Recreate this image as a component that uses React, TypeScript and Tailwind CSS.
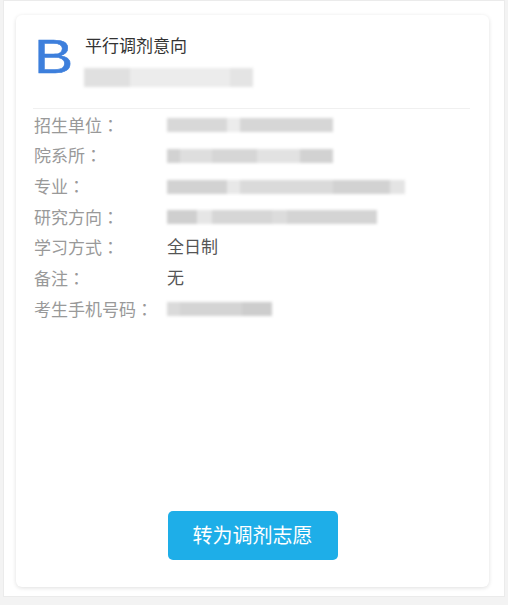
const font = { fontFamily: '"Liberation Sans", "Noto Sans CJK SC", sans-serif' }
const colonFont = { fontFamily: '"Noto Sans CJK JP", sans-serif' }

type Seg = [number, string]

function Blur({ segs, h = 14 }: { segs: Seg[]; h?: number }) {
  return (
    <div className="flex blur-[1.5px]" style={{ height: h }}>
      {segs.map(([w, c], i) => (
        <div key={i} style={{ width: w, background: c }} />
      ))}
    </div>
  )
}

const rows: { label: string; value?: string; segs?: Seg[] }[] = [
  { label: '招生单位', segs: [[60, '#d8d8d8'], [13, '#ececec'], [93, '#d6d6d6']] },
  { label: '院系所', segs: [[13, '#d2d2d2'], [32, '#dedede'], [45, '#d6d6d6'], [43, '#e2e2e2'], [33, '#d2d2d2']] },
  { label: '专业', segs: [[60, '#d2d2d2'], [13, '#e8e8e8'], [93, '#dadada'], [57, '#d2d2d2'], [15, '#e4e4e4']] },
  { label: '研究方向', segs: [[30, '#cfcfcf'], [15, '#e6e6e6'], [60, '#d6d6d6'], [15, '#dcdcdc'], [90, '#d4d4d4']] },
  { label: '学习方式', value: '全日制' },
  { label: '备注', value: '无' },
  { label: '考生手机号码', segs: [[13, '#dadada'], [62, '#d4d4d4'], [30, '#cdcdcd']] },
]

export default function App() {
  return (
    <div className="h-[605px] bg-[#f3f3f3]" style={font}>
      <div className="mx-[3px] h-[597px] bg-white border border-[#ebebeb] pt-[14px] pl-[12px]">
        <div className="w-[473px] h-[572px] bg-white rounded-[6px] shadow-[0_1px_4px_rgba(0,0,0,0.13)] flex flex-col pt-[17px] pb-[27px]">
          <div className="flex items-start pl-[18px]">
            <div className="w-[38px] mr-[13px]">
              <div className="inline-block origin-left scale-x-[1.2] text-[49px] leading-none text-[#3d7fdc] [-webkit-text-stroke:0.5px_#3d7fdc]">
                B
              </div>
            </div>
            <div className="pt-[5px]">
              <div className="text-[17px] leading-[20px] text-[#333]">平行调剂意向</div>
              <div className="mt-[11px] -ml-[1px]">
                <Blur h={19} segs={[[46, '#e0e0e0'], [100, '#ececec'], [23, '#e4e4e4']]} />
              </div>
            </div>
          </div>

          <div className="mt-[21px] ml-[17px] mr-[19px] border-t border-[#f0f0f0]" />

          <div className="pl-[18px] pt-[1px]">
            {rows.map((r) => (
              <div key={r.label} className="flex items-center h-[30.7px] text-[17px]">
                <div className="w-[133px] text-[#999]">
                  {r.label}
                  <span style={colonFont}>：</span>
                </div>
                {r.value ? (
                  <div className="text-[#555]">{r.value}</div>
                ) : (
                  <Blur segs={r.segs!} />
                )}
              </div>
            ))}
          </div>

          <div className="mt-auto flex justify-center">
            <button className="w-[170px] h-[49px] rounded-[5px] bg-[#1eaee8] text-white text-[20px]">
              转为调剂志愿
            </button>
          </div>
        </div>
      </div>
    </div>
  )
}
